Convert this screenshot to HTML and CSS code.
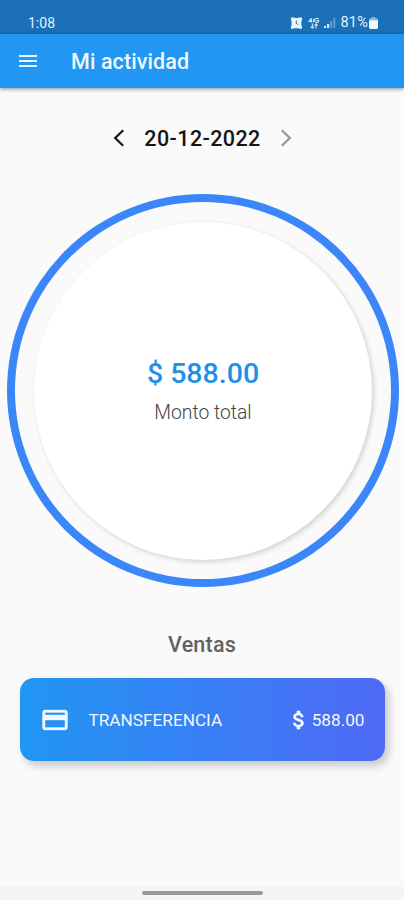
FILE: index.html
```html
<!DOCTYPE html>
<html lang="es">
<head>
    <meta charset="UTF-8">
    <meta name="viewport" content="width=device-width, initial-scale=1.0">
    <title>Mi actividad</title>
    <link rel="stylesheet" href="styles.css">
</head>
<body>
    <div class="status-bar">
        <span class="time">1:08</span>
        <div class="status-icons">
            <!-- Alarm -->
            <svg class="alarm" width="11" height="12" viewBox="0 0 11 12">
                <path d="M0 .5h3l1 .6h3l1-.6h3v2.800l-.6.8v4.400l.6.8v2.500H8.600l-.8-.5H3.200l-.8.5H0V9.300l.6-.8V4.100L0 3.300z" fill="#eef6fd"/>
                <path d="M5.300 3.300v3.200l2 1" fill="none" stroke="#1c70b6" stroke-width="1"/>
            </svg>
            <!-- Mobile data -->
            <svg class="data" width="12" height="13" viewBox="0 0 13 13" fill="none" stroke="#d3e5f4" stroke-width="1.200">
                <path d="M3.500 1 1.200 4.200H4.600M3.700 1V5.500M11.500 1.700C10 .5 7.200.8 7.200 3s2.800 2.800 4.200 1.700V3.200H9.500M6 1.500v3.700"/>
                <path d="M4.700 6.500v5M2.900 9.800l1.800 1.900 1.800-1.900M8.700 12V7M6.900 8.700l1.800-1.900 1.800 1.900"/>
            </svg>
            <!-- Signal -->
            <svg class="signal" width="13" height="12" viewBox="0 0 13 12">
                <path d="M1 9h2v2H1zM4 7h2.200v4H4z" fill="#e1eef9"/>
                <path d="M7.200 4h2v7h-2zM10.300 1h2v10h-2z" fill="#5d9ccf"/>
            </svg>
            <span class="percent">81%</span>
            <!-- Battery -->
            <svg class="battery" width="9" height="12" viewBox="0 0 9 12">
                <path d="M3 0h3v1.500H3z" fill="#8dbbe0"/>
                <rect y="1" width="9" height="11" rx="2" fill="#8dbbe0"/>
                <path d="M0 3.500h9V10a2 2 0 0 1-2 2H2a2 2 0 0 1-2-2z" fill="#f3f9fe"/>
            </svg>
        </div>
    </div>

    <header class="app-bar">
        <svg width="24" height="24" viewBox="0 0 24 24" fill="#e9f5fe">
            <path d="M3 18h18v-2H3v2zm0-5h18v-2H3v2zm0-7v2h18V6H3z"/>
        </svg>
        <h1>Mi actividad</h1>
    </header>

    <main>
        <div class="date-picker">
            <svg width="12" height="18" viewBox="0 0 12 18" fill="none" stroke="#191919" stroke-width="2.300">
                <path d="M10.200 1.200 2.200 9l8 7.800"/>
            </svg>
            <span class="date">20-12-2022</span>
            <svg width="12" height="18" viewBox="0 0 12 18" fill="none" stroke="#999" stroke-width="2.300">
                <path d="M1.800 1.200 9.800 9l-8 7.800"/>
            </svg>
        </div>

        <div class="ring">
            <div class="total">
                <p class="amount">$ 588.00</p>
                <p class="label">Monto total</p>
            </div>
        </div>

        <h2>Ventas</h2>

        <div class="card">
            <svg class="card-icon" width="30" height="30" viewBox="0 0 24 24" fill="#f0f7ff" stroke="#f0f7ff" stroke-width="0.300">
                <path d="M20 4H4c-1.110 0-1.990.89-1.990 2L2 18c0 1.110.89 2 2 2h16c1.110 0 2-.89 2-2V6c0-1.110-.89-2-2-2zm0 14H4v-6h16v6zm0-10H4V6h16v2z"/>
            </svg>
            <span class="card-name">TRANSFERENCIA</span>
            <svg class="money" width="24" height="24" viewBox="0 0 24 24" fill="#fff" stroke="#fff" stroke-width="0.500">
                <path d="M11.800 10.900c-2.270-.59-3-1.200-3-2.150 0-1.090 1.010-1.850 2.700-1.850 1.780 0 2.440.85 2.500 2.100h2.210c-.07-1.720-1.120-3.300-3.210-3.810V3h-3v2.160c-1.940.42-3.500 1.680-3.500 3.610 0 2.310 1.910 3.460 4.700 4.130 2.500.6 3 1.480 3 2.410 0 .69-.49 1.790-2.700 1.790-2.060 0-2.870-.92-2.980-2.100h-2.200c.12 2.190 1.760 3.420 3.680 3.830V21h3v-2.150c1.950-.37 3.500-1.500 3.500-3.550 0-2.840-2.430-3.810-4.700-4.400z"/>
            </svg>
            <span class="card-amount">588.00</span>
        </div>
    </main>

    <footer class="nav-bar">
        <div class="handle"></div>
    </footer>
</body>
</html>
```
FILE: styles.css
```css
* {
    margin: 0;
    padding: 0;
    box-sizing: border-box;
}

body {
    font-family: Roboto, sans-serif;
    display: flex;
    flex-direction: column;
    height: 100vh;
    overflow: hidden;
    background: #fafafa;
}

svg {
    display: block;
    flex-shrink: 0;
}

.status-bar {
    display: flex;
    justify-content: space-between;
    height: 34px;
    padding: 13px 26px 0 28px;
    background: #1b70b7;
    color: #e4f0fa;
    font-size: 14px;
    line-height: 20px;
}

.status-icons {
    display: flex;
    align-items: center;
    height: 20px;
}

.data {
    margin-left: 6px;
}

.signal {
    margin-left: 3px;
}

.percent {
    margin-left: 4px;
    font-size: 14.5px;
    letter-spacing: 0.2px;
}

.battery {
    margin-left: 1px;
}

.app-bar {
    display: flex;
    align-items: center;
    height: 54px;
    padding-left: 16px;
    background: #2196f3;
    color: #f0f8ff;
    box-shadow: 0 1px 4px rgba(0, 0, 0, 0.45);
}

.app-bar h1 {
    margin-left: 31px;
    font-size: 21.5px;
    font-weight: 500;
    letter-spacing: 0.1px;
}

main {
    display: flex;
    flex: 1;
    flex-direction: column;
    align-items: center;
}

.date-picker {
    display: flex;
    align-items: center;
    gap: 19px;
    height: 30px;
    margin: 35px 0 0 1px;
}

.date {
    color: #151515;
    font-size: 21.5px;
    font-weight: 500;
    letter-spacing: 0.4px;
}

.ring {
    display: flex;
    justify-content: center;
    align-items: center;
    width: 392px;
    height: 393px;
    margin: 41px 0 0 2px;
    border: 8px solid #3b87fa;
    border-radius: 50%;
}

.total {
    display: flex;
    flex-direction: column;
    align-items: center;
    width: 338px;
    height: 338px;
    padding-top: 134px;
    border-radius: 50%;
    background: #fff;
    box-shadow: 2px 2px 5px rgba(0, 0, 0, 0.16);
}

.amount {
    color: #1e90ea;
    font-size: 28.5px;
    font-weight: 500;
    line-height: 36px;
}

.label {
    margin-top: 9px;
    color: #444;
    font-size: 19.3px;
    font-weight: 300;
    line-height: 24px;
}

h2 {
    margin-top: 44px;
    color: #626262;
    font-size: 21.5px;
    font-weight: 500;
    line-height: 28px;
    letter-spacing: 0.2px;
}

.card {
    display: flex;
    align-items: center;
    width: 365px;
    height: 83px;
    margin-top: 19px;
    padding: 0 20px;
    border-radius: 14px;
    background: linear-gradient(to right, #2196f3, #4f69f6);
    color: #f3f8ff;
    font-size: 17.2px;
    box-shadow: 4px 5px 9px rgba(0, 0, 0, 0.2);
}

.card-name {
    flex: 1;
    margin-left: 19px;
}

.card-amount {
    margin-left: 1px;
}

.nav-bar {
    display: flex;
    justify-content: center;
    height: 14px;
    padding-top: 5px;
    background: #f5f5f5;
}

.handle {
    width: 121px;
    height: 4px;
    border-radius: 2px;
    background: #999;
}
```
